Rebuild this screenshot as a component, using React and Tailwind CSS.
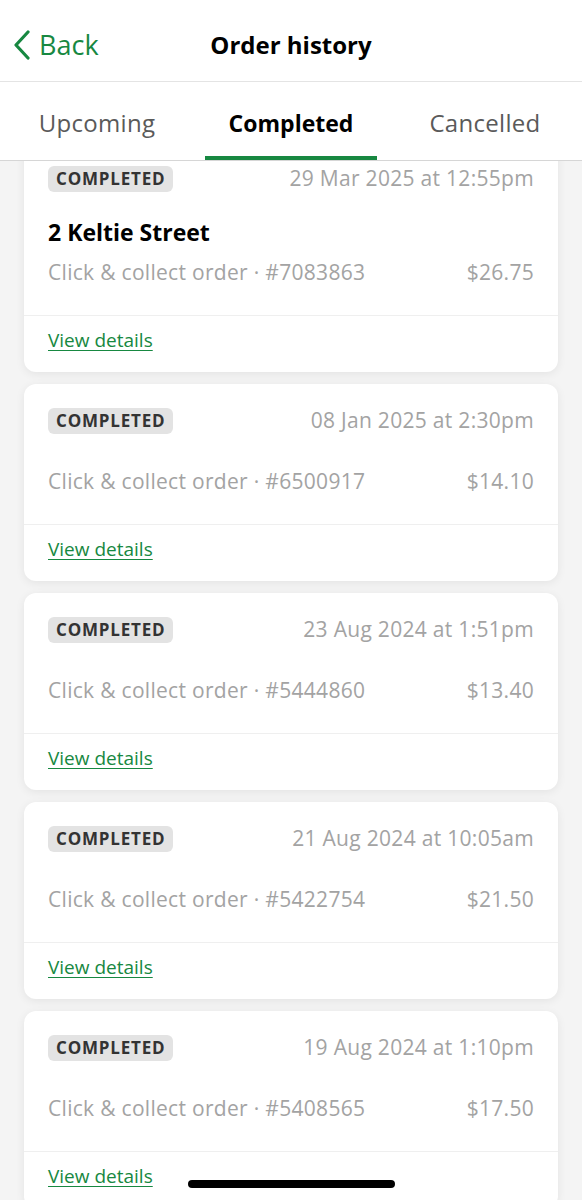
import React from 'react';

const orders = [
  { date: '29 Mar 2025 at 12:55pm', store: '2 Keltie Street', id: '7083863', total: '$26.75' },
  { date: '08 Jan 2025 at 2:30pm', id: '6500917', total: '$14.10' },
  { date: '23 Aug 2024 at 1:51pm', id: '5444860', total: '$13.40' },
  { date: '21 Aug 2024 at 10:05am', id: '5422754', total: '$21.50' },
  { date: '19 Aug 2024 at 1:10pm', id: '5408565', total: '$17.50' },
];

const tabs = ['Upcoming', 'Completed', 'Cancelled'];

const OrderCard = ({ order }) => (
  <div className="bg-white rounded-[12px] shadow-[0_2px_10px_rgba(0,0,0,0.07)] mb-[12px]">
    <div className="px-[24px] pt-[24px] pb-[29px]">
      <div className="flex items-center justify-between h-[26px]">
        <span className="h-[26px] flex items-center px-[8px] rounded-[6px] bg-[#e3e3e3] text-[#333] text-[17px] font-bold tracking-[0.8px]">
          COMPLETED
        </span>
        <span className="text-[21px] tracking-[0.3px] text-[#a3a3a3]">{order.date}</span>
      </div>
      {order.store && (
        <div className="mt-[26px] h-[28px] leading-[28px] text-[23px] font-bold text-black">
          {order.store}
        </div>
      )}
      <div
        className={`flex justify-between h-[28px] leading-[28px] text-[21px] tracking-[0.3px] text-[#a3a3a3] ${
          order.store ? 'mt-[12px]' : 'mt-[33px]'
        }`}
      >
        <span>Click &amp; collect order · #{order.id}</span>
        <span>{order.total}</span>
      </div>
    </div>
    <div className="border-t border-[#efefef] h-[57px] px-[24px] pt-[12px]">
      <a className="text-[19px] leading-[24px] text-[#178841] underline underline-offset-[3px]">
        View details
      </a>
    </div>
  </div>
);

export default function App() {
  return (
    <div
      className="w-[582px] h-[1200px] bg-[#f4f4f4] flex flex-col overflow-hidden relative"
      style={{ fontFamily: '"Open Sans", Lato, sans-serif' }}
    >
      {/* header */}
      <div className="h-[82px] shrink-0 bg-white border-b border-[#e4e4e4] flex items-center relative pt-[9px]">
        <div className="flex items-center pl-[13px] text-[#178841]">
          <svg width="18" height="30" viewBox="0 0 18 30" fill="none">
            <path d="M15 2 L3 15 L15 28" stroke="#178841" strokeWidth="3.2" strokeLinecap="round" strokeLinejoin="round" />
          </svg>
          <span className="ml-[8px] text-[27px]">Back</span>
        </div>
        <div className="absolute left-0 right-0 text-center text-[24px] font-bold text-black pointer-events-none">
          Order history
        </div>
      </div>

      {/* tabs */}
      <div className="h-[79px] shrink-0 bg-white border-b border-[#d6d6d6] grid grid-cols-3">
        {tabs.map((t) => (
          <div key={t} className="relative flex items-center justify-center pt-[4px]">
            <span
              className={
                t === 'Completed'
                  ? 'text-[23px] font-bold text-black'
                  : 'text-[24px] tracking-[0.3px] text-[#5a5a5a]'
              }
            >
              {t}
            </span>
            {t === 'Completed' && (
              <div className="absolute bottom-0 left-[11px] right-[11px] h-[4px] bg-[#178841]" />
            )}
          </div>
        ))}
      </div>

      {/* list */}
      <div className="flex-1 overflow-hidden px-[24px]">
        <div className="-mt-[19px]">
          {orders.map((o) => (
            <OrderCard key={o.id} order={o} />
          ))}
        </div>
      </div>

      <div className="absolute bottom-[12px] left-[188px] w-[207px] h-[8px] rounded-full bg-black" />
    </div>
  );
}
